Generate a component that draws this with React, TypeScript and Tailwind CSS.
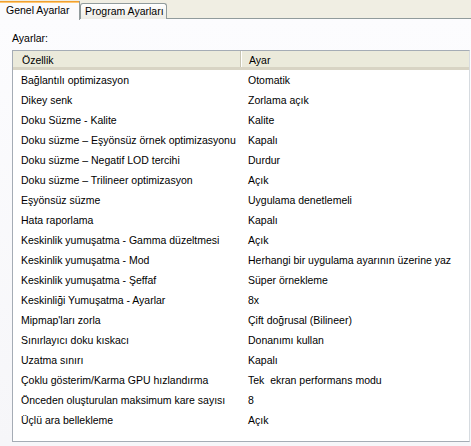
import React from 'react';

const ROWS: [string, string][] = [
  ['Bağlantılı optimizasyon', 'Otomatik'],
  ['Dikey senk', 'Zorlama açık'],
  ['Doku Süzme - Kalite', 'Kalite'],
  ['Doku süzme – Eşyönsüz örnek optimizasyonu', 'Kapalı'],
  ['Doku süzme – Negatif LOD tercihi', 'Durdur'],
  ['Doku süzme – Trilineer optimizasyon', 'Açık'],
  ['Eşyönsüz süzme', 'Uygulama denetlemeli'],
  ['Hata raporlama', 'Kapalı'],
  ['Keskinlik yumuşatma - Gamma düzeltmesi', 'Açık'],
  ['Keskinlik yumuşatma - Mod', 'Herhangi bir uygulama ayarının üzerine yaz'],
  ['Keskinlik yumuşatma - Şeffaf', 'Süper örnekleme'],
  ['Keskinliği Yumuşatma - Ayarlar', '8x'],
  ["Mipmap'ları zorla", 'Çift doğrusal (Bilineer)'],
  ['Sınırlayıcı doku kıskacı', 'Donanımı kullan'],
  ['Uzatma sınırı', 'Kapalı'],
  ['Çoklu gösterim/Karma GPU hızlandırma', 'Tek  ekran performans modu'],
  ['Önceden oluşturulan maksimum kare sayısı', '8'],
  ['Üçlü ara bellekleme', 'Açık'],
];

const App: React.FC = () => {
  return (
    <div
      className="w-[471px] h-[446px] overflow-hidden flex flex-col bg-[#f0eee3] text-[10.5px] text-black"
      style={{ fontFamily: '"Liberation Sans", Arial, sans-serif' }}
    >
      {/* tab strip */}
      <div className="h-[19px] flex items-end relative whitespace-nowrap">
        <div className="w-[80px] h-[19px] flex flex-col bg-[#fbfbfc] border-r border-[#919b9c] relative z-10 -mb-px">
          <div className="h-[2px] bg-[#f0a030] border-b border-[#ffc873]" />
          <div className="pl-[6px] pt-[1px] leading-[13px]">Genel Ayarlar</div>
        </div>
        <div className="w-[87px] h-[16px] border border-b-0 border-[#919b9c] rounded-t-[3px] bg-gradient-to-b from-white to-[#ecebe5] pl-[4px] leading-[15px]">
          Program Ayarları
        </div>
        <div className="flex-1 border-b border-[#919b9c]" />
      </div>

      {/* panel */}
      <div className="flex-1 flex flex-col bg-gradient-to-b from-[#fcfcfe] to-[#f6f6f9] pl-[12px]">
        <div className="h-[31px] pt-[13px] leading-[13px]">Ayarlar:</div>
        <div className="w-[458px] h-[392px] border border-[#a5acb5] border-r-[#d6dbe0] bg-white flex flex-col">
          {/* header */}
          <div className="h-[19px] flex bg-[#ebeadb] border-b-[3px] border-[#d8d4c4] shrink-0">
            <div className="w-[228px] pl-[9px] pt-[1px] leading-[16px] border-r border-[#c7c5b2] shadow-[1px_0_0_#ffffff]">Özellik</div>
            <div className="flex-1 pl-[8px] pt-[1px] leading-[16px]">Ayar</div>
          </div>
          {/* rows */}
          {ROWS.map(([name, value], i) => (
            <div key={i} className="h-[20px] pt-[2px] flex items-center shrink-0 whitespace-pre">
              <div className="w-[229px] pl-[8px]">{name}</div>
              <div className="flex-1 pl-[6px]">{value}</div>
            </div>
          ))}
        </div>
      </div>
    </div>
  );
};

export default App;
